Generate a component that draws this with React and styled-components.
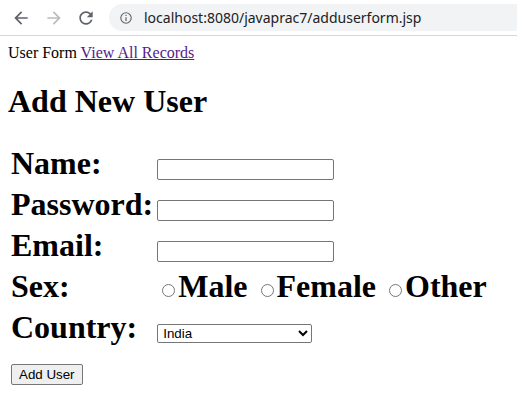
import React from 'react'
import styled, { createGlobalStyle } from 'styled-components'

const GlobalStyle = createGlobalStyle`
  html, body {
    margin: 0;
    background: #fff;
  }
  body {
    font-family: "Liberation Serif", "Times New Roman", serif;
    font-size: 16px;
    color: #000;
  }
`

const Toolbar = styled.div`
  display: flex;
  align-items: center;
  height: 35px;
  border-bottom: 1px solid #d6d6d6;
  background: #fff;
  overflow: hidden;
`

const NavButton = styled.div`
  display: flex;
  align-items: center;
  justify-content: center;
  width: 24px;
  height: 24px;
  margin-left: ${p => p.gap}px;
  color: ${p => (p.disabled ? '#babcbe' : '#5f6368')};
`

const Omnibox = styled.div`
  flex: 1;
  display: flex;
  align-items: center;
  height: 27px;
  margin-left: 11px;
  border-radius: 14px 0 0 14px;
  background: #f1f3f4;
`

const InfoIcon = styled.div`
  display: flex;
  margin-left: 11px;
  color: #5f6368;
`

const Url = styled.span`
  margin-left: 12px;
  font-family: "Noto Sans", "Open Sans", sans-serif;
  font-size: 14px;
  color: #202124;
  white-space: nowrap;
`

const Page = styled.div`
  padding: 8px;
`

const Link = styled.a`
  color: #551a8b;
  text-decoration: underline;
`

const Heading = styled.h1`
  font-size: 32px;
  font-weight: bold;
  margin: 21.44px 0;
`

const FormTable = styled.table`
  border-spacing: 2px;
  font-size: 32px;
  font-weight: bold;

  td {
    padding: 1px;
  }
`

const TextInput = styled.input`
  box-sizing: border-box;
  width: 177px;
  height: 21px;
  padding: 1px 2px;
  border: 1px solid #767676;
  border-radius: 2px;
  font-family: "Liberation Sans", Arial, sans-serif;
  font-size: 13.33px;
`

const Radio = styled.input`
  width: 13px;
  height: 13px;
  margin: 3px 3px 0 5px;
`

const Select = styled.select`
  box-sizing: border-box;
  width: 155px;
  height: 19px;
  padding: 0 0 0 1px;
  border: 1px solid #767676;
  border-radius: 2px;
  background: #fff;
  font-family: "Liberation Sans", Arial, sans-serif;
  font-size: 13.33px;
  color: #000;
`

const SubmitButton = styled.button`
  box-sizing: border-box;
  height: 21px;
  padding: 1px 7px;
  border: 1px solid #767676;
  border-radius: 2px;
  background: #efefef;
  font-family: "Liberation Sans", Arial, sans-serif;
  font-size: 13.33px;
  color: #000;
`

const BackIcon = () => (
  <svg width="20" height="20" viewBox="0 0 24 24" fill="currentColor">
    <path d="M20 11H7.83l5.59-5.59L12 4l-8 8 8 8 1.41-1.41L7.83 13H20v-2z" />
  </svg>
)

const ForwardIcon = () => (
  <svg width="20" height="20" viewBox="0 0 24 24" fill="currentColor">
    <path d="M4 11h12.17l-5.59-5.59L12 4l8 8-8 8-1.41-1.41L16.17 13H4v-2z" />
  </svg>
)

const ReloadIcon = () => (
  <svg width="20" height="20" viewBox="0 0 24 24" fill="currentColor">
    <path d="M17.65 6.35C16.2 4.9 14.21 4 12 4c-4.42 0-7.99 3.58-7.99 8s3.570 8 7.99 8c3.73 0 6.84-2.55 7.73-6h-2.08c-.82 2.33-3.04 4-5.650 4-3.31 0-6-2.69-6-6s2.69-6 6-6c1.66 0 3.14.69 4.22 1.78L13 11h7V4l-2.35 2.35z" />
  </svg>
)

const Info = () => (
  <svg width="12" height="12" viewBox="0 0 12 12" fill="none" stroke="currentColor">
    <circle cx="6" cy="6" r="5.2" strokeWidth="1.1" />
    <line x1="6" y1="5.2" x2="6" y2="9" strokeWidth="1.2" />
    <circle cx="6" cy="3.4" r="0.7" fill="currentColor" stroke="none" />
  </svg>
)

export default function App() {
  return (
    <>
      <GlobalStyle />
      <Toolbar>
        <NavButton gap={9}><BackIcon /></NavButton>
        <NavButton gap={9} disabled><ForwardIcon /></NavButton>
        <NavButton gap={8}><ReloadIcon /></NavButton>
        <Omnibox>
          <InfoIcon><Info /></InfoIcon>
          <Url>localhost:8080/javaprac7/adduserform.jsp</Url>
        </Omnibox>
      </Toolbar>
      <Page>
        User Form <Link href="#">View All Records</Link>
        <Heading>Add New User</Heading>
        <form onSubmit={e => e.preventDefault()}>
          <FormTable>
            <tbody>
              <tr>
                <td>Name:</td>
                <td><TextInput type="text" name="name" /></td>
              </tr>
              <tr>
                <td>Password:</td>
                <td><TextInput type="password" name="password" /></td>
              </tr>
              <tr>
                <td>Email:</td>
                <td><TextInput type="email" name="email" /></td>
              </tr>
              <tr>
                <td>Sex:</td>
                <td>
                  <Radio type="radio" name="sex" value="male" />Male{' '}
                  <Radio type="radio" name="sex" value="female" />Female{' '}
                  <Radio type="radio" name="sex" value="other" />Other
                </td>
              </tr>
              <tr>
                <td>Country:</td>
                <td>
                  <Select name="country" defaultValue="India">
                    <option>India</option>
                    <option>Pakistan</option>
                    <option>Afghanistan</option>
                    <option>Berma</option>
                    <option>Other</option>
                  </Select>
                </td>
              </tr>
              <tr>
                <td colSpan={2}>
                  <SubmitButton type="submit">Add User</SubmitButton>
                </td>
              </tr>
            </tbody>
          </FormTable>
        </form>
      </Page>
    </>
  )
}
